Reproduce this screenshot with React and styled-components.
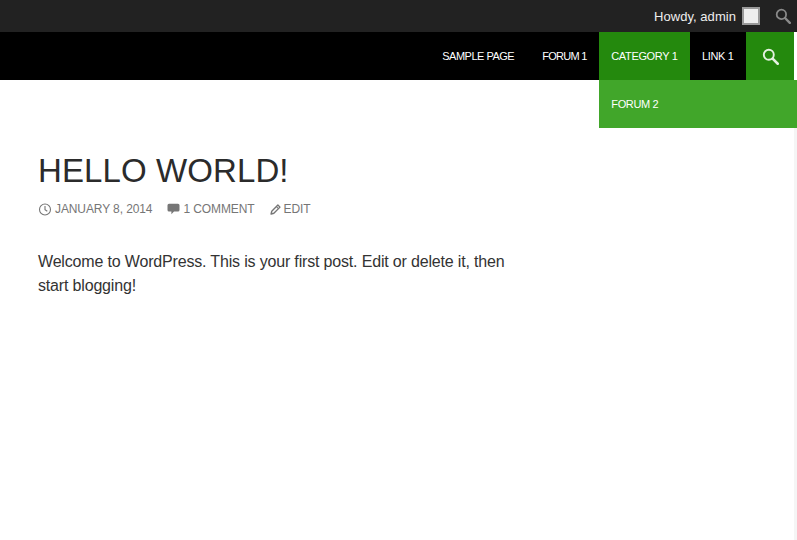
import React from 'react';
import styled, { createGlobalStyle } from 'styled-components';

const GlobalStyle = createGlobalStyle`
  html, body {
    margin: 0;
    padding: 0;
    height: 100%;
    overflow: hidden;
    background: #fff;
  }
  body {
    font-family: "Liberation Sans", Arial, sans-serif;
  }
`;

const SearchIcon = ({ size, color }) => (
  <svg width={size} height={size} viewBox="0 0 16 16" fill="none">
    <circle cx="6.4" cy="6.4" r="4.7" stroke={color} strokeWidth="1.8" />
    <path d="M10 10l4.8 4.8" stroke={color} strokeWidth="2.4" strokeLinecap="round" />
  </svg>
);

const ClockIcon = () => (
  <svg width="14" height="13" viewBox="0 0 14 13" fill="none">
    <circle cx="7" cy="6.5" r="5.5" stroke="#767676" strokeWidth="1.1" />
    <path d="M7 3v3.7l2.3 1.6" stroke="#767676" strokeWidth="1.1" />
  </svg>
);

const CommentIcon = () => (
  <svg width="13" height="12" viewBox="0 0 13 12">
    <path d="M2 .8h9a1.5 1.5 0 0 1 1.5 1.5v4.6A1.5 1.5 0 0 1 11 8.4H7L4.4 11.2V8.4H2A1.5 1.5 0 0 1 .5 6.9V2.3A1.5 1.5 0 0 1 2 .8z" fill="#767676" />
  </svg>
);

const PencilIcon = () => (
  <svg width="11" height="11" viewBox="0 0 12 12" fill="none">
    <path d="M8.6 1.1l2.3 2.3-6.7 6.7-3 .8.7-3.1z" stroke="#767676" strokeWidth="1.5" strokeLinejoin="round" />
    <path d="M7 2.8l2.2 2.2" stroke="#767676" strokeWidth="1.1" />
  </svg>
);

function App() {
  return (
    <Page>
      <GlobalStyle />
      <AdminBar>
        <Howdy>Howdy, admin</Howdy>
        <Avatar />
        <AdminSearch>
          <SearchIcon size={16} color="#8a8a8a" />
        </AdminSearch>
      </AdminBar>

      <NavBar>
        <NavItem $spacing={-0.5}>Sample Page</NavItem>
        <NavItem $spacing={-0.7} $left={15.5}>Forum 1</NavItem>
        <NavItem $active>
          Category 1
          <Dropdown>Forum 2</Dropdown>
        </NavItem>
        <NavItem>Link 1</NavItem>
        <SearchToggle>
          <SearchIcon size={17} color="#e4f1e0" />
        </SearchToggle>
      </NavBar>

      <Article>
        <Title>Hello World!</Title>
        <Meta>
          <MetaItem>
            <ClockIcon />
            January 8, 2014
          </MetaItem>
          <MetaItem>
            <CommentIcon />
            1 Comment
          </MetaItem>
          <MetaItem>
            <PencilIcon />
            Edit
          </MetaItem>
        </Meta>
        <Body>Welcome to WordPress. This is your first post. Edit or delete it, then start blogging!</Body>
      </Article>
      <ScrollStrip />
    </Page>
  );
}

const Page = styled.div`
  position: relative;
  width: 797px;
  height: 540px;
  overflow: hidden;
  background: #fff;
`;

const AdminBar = styled.div`
  display: flex;
  justify-content: flex-end;
  align-items: center;
  height: 32px;
  background: #222;
  color: #eee;
`;

const Howdy = styled.span`
  font-size: 13px;
  letter-spacing: 0.05px;
  margin-right: 6px;
`;

const Avatar = styled.div`
  box-sizing: border-box;
  width: 18px;
  height: 18px;
  background: #eee;
  border: 2px solid #999;
`;

const AdminSearch = styled.div`
  display: flex;
  margin: 0 6px 0 15px;
`;

const NavBar = styled.nav`
  display: flex;
  justify-content: flex-end;
  height: 48px;
  width: 794px;
  background: #000;
`;

const NavItem = styled.div`
  position: relative;
  padding: 0 12.5px 0 ${(p) => p.$left ?? 12}px;
  font-size: 11px;
  letter-spacing: ${(p) => p.$spacing ?? -0.35}px;
  line-height: 48px;
  text-transform: uppercase;
  color: #fff;
  background: ${(p) => (p.$active ? '#24890d' : 'transparent')};
`;

const Dropdown = styled.div`
  position: absolute;
  top: 48px;
  left: 0;
  box-sizing: border-box;
  width: 198px;
  height: 48px;
  padding-left: 12px;
  background: #41a62a;
`;

const SearchToggle = styled.div`
  display: flex;
  align-items: center;
  justify-content: center;
  width: 48px;
  background: #24890d;
`;

const Article = styled.article`
  padding: 72px 0 0 38px;
  width: 474px;
`;

const Title = styled.h1`
  margin: 0 0 13px;
  font-size: 33px;
  font-weight: 400;
  letter-spacing: 0.1px;
  line-height: 37px;
  text-transform: uppercase;
  color: #2b2b2b;
`;

const Meta = styled.div`
  display: flex;
  align-items: center;
  gap: 15px;
  height: 14px;
  margin-bottom: 34px;
  font-size: 12px;
  letter-spacing: -0.1px;
  text-transform: uppercase;
  color: #767676;
`;

const MetaItem = styled.span`
  display: flex;
  align-items: center;
  gap: 3px;
`;

const Body = styled.p`
  margin: 0;
  font-size: 16px;
  letter-spacing: -0.17px;
  line-height: 24px;
  color: #333;
`;

const ScrollStrip = styled.div`
  position: absolute;
  top: 128px;
  right: 0;
  bottom: 0;
  width: 3px;
  background: #f5f5f5;
`;

export default App;
